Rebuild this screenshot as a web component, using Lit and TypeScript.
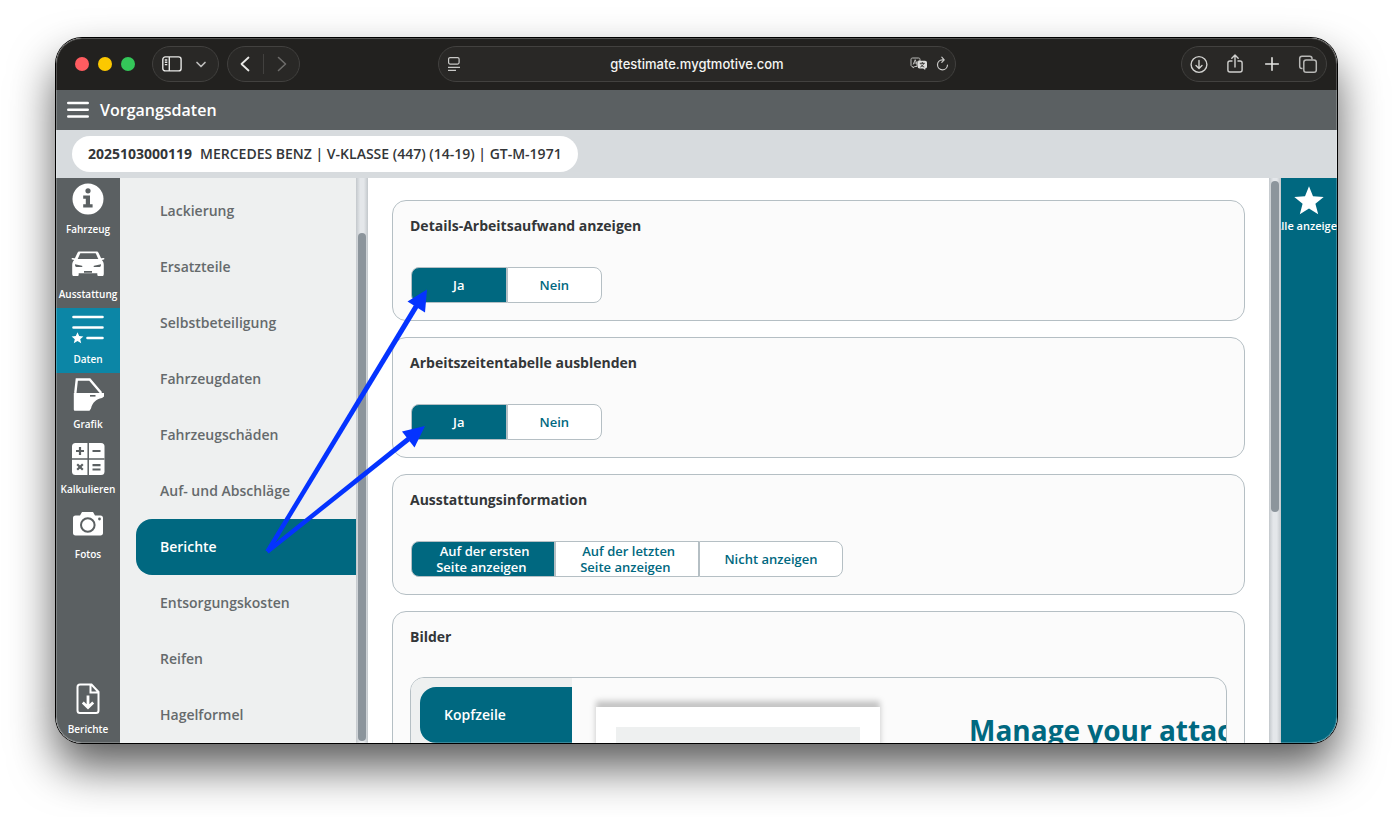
import { LitElement, html, css, svg } from "lit";
import { customElement, property, state } from "lit/decorators.js";
import { classMap } from "lit/directives/class-map.js";

const railIcons: Record<string, unknown> = {
  info: svg`<circle cx="18" cy="18" r="15.5" fill="#fff"/><circle cx="18" cy="9.8" r="2.6" fill="#5b6062"/><path d="M13.2 14.6H20v8.6h2.6v3.2h-9.4v-3.2h2.6v-5.4h-2.6z" fill="#5b6062"/>`,
  car: svg`<path d="M9.5 5.5h17c1 0 1.6.5 2 1.3l2.6 5.4 2.7-.3c.8 0 .8 1.4 0 1.7l-2 .5c1.4 1.2 2 2.9 2 4.8v8.5c0 1.7-.4 2.6-1.6 2.6h-3.4c-1 0-1.5-.7-1.5-1.6v-1.2H8.700v1.200c0 .9-.5 1.600-1.500 1.600H3.800c-1.200 0-1.600-.900-1.600-2.600v-8.500c0-1.900.600-3.600 2-4.800l-2-.5c-.8-.3-.8-1.700 0-1.700l2.700.3 2.600-5.400c.4-.8 1-1.300 2-1.300z" fill="#fff"/><path d="M10.300 7.300h15.400l2.600 5.600H7.700z" fill="#5b6062"/><path d="M5 18.300l7 1.500c.6.200.6 1.200-.2 1.200H6.500C5.200 21 5 19.500 5 18.300zM31 18.300l-7 1.500c-.6.200-.6 1.200.2 1.200h5.300c1.300 0 1.500-1.500 1.500-2.700zM14 25h8v1.700h-8z" fill="#5b6062"/>`,
  list: svg`<path d="M3.500 6h29M3.500 16.500h29M17.500 27h15" stroke="#fff" stroke-width="2.600" stroke-linecap="round"/><path d="M7.500 21.200l1.700 3.800 4.200.4-3.200 2.800 1 4.100-3.700-2.200-3.700 2.200 1-4.100-3.200-2.800 4.200-.4z" fill="#fff"/>`,
  door: svg`<path d="M5.300 17 6.800 3.500h12.900L31.200 17" fill="none" stroke="#fff" stroke-width="2.400"/><path d="M3.800 17h30.200v3.500l-2 1.500c-6 1-9.500 4.500-11 10.500l-1.500 2.300H5.300c-1 0-1.500-.5-1.500-1.500z" fill="#fff"/><path d="M20 19.800h5.500" stroke="#5b6062" stroke-width="1.600"/>`,
  calc: svg`<rect x="2" y="2" width="32.500" height="32" rx="3.500" fill="#fff"/><path d="M18.200 2v32M2 18h32.500" stroke="#5b6062" stroke-width="1.500"/><path d="M6 10h8M10 6v8M22.500 10h8M7.200 23.200l5.600 5.600M12.800 23.200l-5.600 5.600M22.500 24.200h8M22.500 28.500h8" stroke="#5b6062" stroke-width="2.200"/>`,
  camera: svg`<path d="M5.500 9.500H10L12 6h11l2 3.500h5.500c1.700 0 2.500.9 2.500 2.500v15c0 1.600-.9 2.500-2.500 2.500h-25C3.900 29.500 3 28.600 3 27V12c0-1.600.9-2.500 2.500-2.500z" fill="#fff"/><circle cx="17.800" cy="19" r="6.800" fill="none" stroke="#5b6062" stroke-width="2"/><circle cx="29.500" cy="13" r="1.400" fill="#5b6062"/>`,
  report: svg`<path d="M10 3.500h11.500l7 7.500v18.500c0 1.700-.8 2.500-2.500 2.500H10c-1.700 0-2.500-.8-2.500-2.500V6c0-1.700.8-2.500 2.500-2.500zM20.500 3.500v8h8" fill="none" stroke="#fff" stroke-width="2"/><path d="M18 14.500v11M12.800 21.500l5.200 5 5.200-5" fill="none" stroke="#fff" stroke-width="2.800"/>`,
  star: svg`<path d="M18 4.200l4 10.100 10.700.6-8.300 6.800 2.800 10.500L18 26.400l-9.200 5.800 2.800-10.500-8.300-6.800 10.700-.6z" fill="#fff"/>`,
};

const glyph = (name: string) =>
  html`<svg width="36" height="36" viewBox="0 0 36 36" aria-hidden="true">${railIcons[name]}</svg>`;

@customElement("option-group")
export class OptionGroup extends LitElement {
  @property({ type: Array }) options: string[] = [];
  @property({ type: Boolean, reflect: true }) wide = false;
  @state() private selected = 0;

  static styles = css`
    :host { display: flex; margin-left: 1px; width: 191px; }
    :host([wide]) { width: 432px; }
    .option {
      flex: 1; height: 36px; padding: 0 4px; box-sizing: border-box;
      border: 1px solid #b5bfc4; background: #fff; color: #006880;
      font: 600 13px/16px "Open Sans", sans-serif; cursor: pointer;
    }
    :host([wide]) .option { padding: 0 20px; }
    .option:first-child { border-radius: 8px 0 0 8px; }
    .option:last-child { border-radius: 0 8px 8px 0; }
    .on { background: #006880; color: #fff; }
  `;

  render() {
    return this.options.map(
      (o, i) => html`<button
        type="button"
        class=${classMap({ option: true, on: i === this.selected })}
        aria-pressed=${i === this.selected}
        @click=${() => (this.selected = i)}
      >${o}</button>`
    );
  }
}

@customElement("app-root")
export class AppRoot extends LitElement {
  static styles = css`
    * { box-sizing: border-box; }
    :host {
      display: flex; height: 100vh; box-sizing: border-box; padding: 38px 56px 74px;
      background: #fff; overflow: hidden;
      font-family: "Open Sans", sans-serif; color: #333638;
    }
    button { border: 0; padding: 0; background: none; color: inherit; font: inherit; cursor: pointer; }
    a { color: inherit; text-decoration: none; }
    svg { display: block; flex: none; }
    .window {
      position: relative; flex: 1; min-width: 0; display: flex; flex-direction: column;
      border-radius: 26px;
      box-shadow: 0 0 0 1px #000, 0 24px 46px rgba(0, 0, 0, .65);
    }
    .clip {
      flex: 1; min-height: 0; display: flex; flex-direction: column;
      border-radius: 26px; overflow: hidden; background: #fff;
    }
    .edge {
      position: absolute; inset: 0; border-radius: 26px; pointer-events: none;
      box-shadow: inset 0 0 0 1px rgba(255, 255, 255, .22);
    }
    .toolbar {
      height: 52px; flex: none; display: grid; grid-template-columns: 1fr minmax(0, 518px) 1fr;
      align-items: center; background: #22211f; color: #e8e8e6;
    }
    .left { display: flex; align-items: center; }
    .lights { display: flex; gap: 9px; margin: 0 17px 0 19px; }
    .light { width: 14px; height: 14px; border-radius: 50%; background: #ff5c60; }
    .light.min { background: #fcc800; }
    .light.max { background: #34c759; }
    .pill {
      display: flex; align-items: center; height: 36px; border: 1px solid #42413f;
      border-radius: 18px; background: #292826;
    }
    .pill button { display: grid; place-items: center; }
    .tabs { width: 67px; margin-right: 8px; padding: 0 9px; justify-content: space-between; }
    .nav { width: 73px; padding: 0 9px; justify-content: space-between; }
    .split { width: 1px; height: 20px; background: #42413f; }
    .address { padding: 0 6px 0 8px; gap: 8px; }
    .url {
      flex: 1; min-width: 0; height: 24px; padding: 0 0 0 24px; border: 0; background: none; color: #f5f5f3;
      font: 500 13px/24px Inter, sans-serif; text-align: center;
    }
    .tools { justify-self: end; width: 146px; margin-right: 10px; padding: 0 8px 0 7px; justify-content: space-between; }
    .header { height: 40px; flex: none; display: flex; align-items: center; gap: 11px; padding: 0 11px; background: #5b6062; color: #fff; }
    .title { margin: 0; font-size: 16px; line-height: 24px; font-weight: 600; }
    .case { height: 48px; flex: none; display: flex; align-items: center; padding: 0 16px; background: #d7dbde; }
    .chip { display: flex; gap: 8px; padding: 8px 16px; border-radius: 18px; background: #fff; font-size: 14px; line-height: 20px; font-weight: 600; white-space: nowrap; }
    .chip b { font-weight: 700; }
    .body { flex: 1; min-height: 0; display: flex; }
    .rail { width: 64px; flex: none; display: flex; flex-direction: column; background: #5b6062; color: #fff; }
    .item {
      height: 65px; flex: none; display: flex; flex-direction: column; align-items: center; gap: 4px;
      padding-top: 3px; color: #fff; font-size: 10px; line-height: 16px; font-weight: 600; white-space: nowrap;
    }
    .item.on { background: #0c86a6; }
    .item.last { margin-top: auto; }
    .menu { width: 236px; flex: none; padding: 5px 0 0 16px; overflow: hidden; background: #eef0f0; }
    .entry {
      display: flex; align-items: center; height: 56px; padding: 0 0 2px 24px;
      border-radius: 16px 0 0 16px; color: #656a6c; font-size: 14px; font-weight: 600;
    }
    .entry.on { background: #006880; color: #fff; }
    .track {
      width: 12px; flex: none; display: flex; flex-direction: column; padding: 2px;
      background: linear-gradient(90deg, #c3c8cc, #e4e7ea 35%, #e4e7ea 65%, #c3c8cc);
    }
    .thumb { border-radius: 4px; background: #8c959c; }
    .menu-thumb { flex: 1; margin-top: 53px; }
    .main-thumb { height: 59%; margin-top: 1px; }
    .content { flex: 1; min-width: 0; overflow: hidden; padding: 22px 24px 0; display: flex; flex-direction: column; gap: 16px; }
    .card { flex: none; padding: 15px 17px 17px; border: 1px solid #b5bfc4; border-radius: 14px; background: #fbfbfb; }
    .name { margin: 0 0 31px; font-size: 14px; line-height: 20px; font-weight: 700; }
    .images { display: flex; height: 320px; margin-top: -1px; border: 1px solid #b5bfc4; border-radius: 14px; overflow: hidden; }
    .sections { width: 161px; flex: none; padding: 9px 0 0 9px; background: #eef0f0; }
    .paper { width: 284px; flex: none; margin: 29px 89px 0 24px; padding: 20px; background: #fff; box-shadow: 0 -6px 6px rgba(0, 0, 0, .22); }
    .sheet { height: 100%; background: #eef0f0; }
    .promo { margin: 32px 0 0; color: #006880; font-size: 28px; line-height: 40px; font-weight: 700; white-space: nowrap; }
    .aside { width: 56px; flex: none; overflow: hidden; background: #006880; }
    .aside .item { padding-top: 4px; gap: 0; font-size: 11px; }
    .arrows { position: absolute; left: 206px; top: 246px; pointer-events: none; }
  `;

  private rail = [
    ["info", "Fahrzeug"], ["car", "Ausstattung"], ["list", "Daten"],
    ["door", "Grafik"], ["calc", "Kalkulieren"], ["camera", "Fotos"],
  ];
  private entries = [
    "Lackierung", "Ersatzteile", "Selbstbeteiligung", "Fahrzeugdaten", "Fahrzeugschäden",
    "Auf- und Abschläge", "Berichte", "Entsorgungskosten", "Reifen", "Hagelformel",
  ];
  private cards = [
    { name: "Details-Arbeitsaufwand anzeigen", options: ["Ja", "Nein"] },
    { name: "Arbeitszeitentabelle ausblenden", options: ["Ja", "Nein"] },
    {
      name: "Ausstattungsinformation",
      options: ["\u00a0Auf der ersten Seite anzeigen\u00a0", "\u00a0Auf der letzten Seite anzeigen\u00a0", "Nicht anzeigen"],
    },
  ];

  private toolbar() {
    return html`<div class="toolbar">
      <div class="left">
        <div class="lights">
          <button class="light" aria-label="Schließen"></button>
          <button class="light min" aria-label="Minimieren"></button>
          <button class="light max" aria-label="Vergrößern"></button>
        </div>
        <div class="pill tabs">
          <button aria-label="Seitenleiste">
            <svg width="20" height="16" viewBox="0 0 20 16" fill="none" stroke="currentColor" stroke-width="1.400"><rect x=".8" y=".9" width="18.300" height="14" rx="2.500"/><path d="M7.300 1v14M2.800 4h2.500M2.800 6.300h2.500M2.800 8.600h2.500"/></svg>
          </button>
          <button aria-label="Tabgruppen">
            <svg width="16" height="16" viewBox="0 0 16 16" fill="none" stroke="#bdbdbb" stroke-width="1.700" stroke-linecap="round" stroke-linejoin="round"><path d="M4 6.500l4 4 4-4"/></svg>
          </button>
        </div>
        <div class="pill nav">
          <button aria-label="Zurück"><svg width="16" height="18" viewBox="0 0 16 18" fill="none" stroke="currentColor" stroke-width="1.800" stroke-linecap="round" stroke-linejoin="round"><path d="M11.500 2.500L4.500 9l7 6.500"/></svg></button>
          <span class="split"></span>
          <button aria-label="Vorwärts"><svg width="16" height="18" viewBox="0 0 16 18" fill="none" stroke="#6d6c6a" stroke-width="1.600" stroke-linecap="round" stroke-linejoin="round"><path d="M4.500 2.500l7 6.500-7 6.500"/></svg></button>
        </div>
      </div>
      <div class="pill address">
        <button aria-label="Seitenmenü"><svg width="14" height="16" viewBox="0 0 14 16" fill="none" stroke="#c9c9c7" stroke-width="1.200"><rect x="1.600" y="1.600" width="10.500" height="6.500" rx="1.500"/><path d="M1 11.300h12M1 14.400h8"/></svg></button>
        <input class="url" type="text" aria-label="Adresse" value="gtestimate.mygtmotive.com" />
        <button aria-label="Übersetzen"><svg width="18" height="14" viewBox="0 0 18 14"><path d="M2.500 1h6c1 0 1.500.5 1.500 1.500V4H9c-1 0-2 .8-2 2v3.500H4.800L3 11V9.500h-.5C1.500 9.500 1 9 1 8V2.500C1 1.500 1.500 1 2.500 1z" fill="none" stroke="#bdbdbb"/><path d="M3.200 7.500l2-4.800 2 4.800M4 6h2.500" fill="none" stroke="#bdbdbb"/><path d="M9.500 3.800H15c1.300 0 2 .7 2 2v3.700c0 1.200-.6 2-1.800 2V13l-2-1.500H9.500c-1.200 0-1.800-.8-1.800-2V5.800c0-1.300.6-2 1.800-2z" fill="#dededc"/><path d="M9.800 6.300h5M12.300 5v1.300M10.300 10c2-.8 3-2 3.300-3.500M11 7.500c.6 1.300 1.800 2 3.300 2.500" fill="none" stroke="#292826" stroke-width=".9"/></svg></button>
        <button aria-label="Neu laden"><svg width="13" height="16" viewBox="0 0 13 16" fill="none" stroke="#c9c9c7" stroke-width="1.200" stroke-linecap="round" stroke-linejoin="round"><path d="M7.500 3.800H6.300A5 5 0 1 0 11.500 9M5.800 1.200l2.400 2.600-2.400 2.600"/></svg></button>
      </div>
      <div class="pill tools">
        <button aria-label="Downloads"><svg width="20" height="20" viewBox="0 0 20 20" fill="none" stroke="#d0d0ce" stroke-width="1.400" stroke-linecap="round" stroke-linejoin="round"><circle cx="10" cy="10.500" r="7.900"/><path d="M10 6.500v7.500M7 11.500l3 3 3-3"/></svg></button>
        <button aria-label="Teilen"><svg width="20" height="20" viewBox="0 0 20 20" fill="none" stroke="#d0d0ce" stroke-width="1.400" stroke-linecap="round" stroke-linejoin="round"><path d="M7 7H5C3.600 7 2.900 7.700 2.900 9v7c0 1.300.7 2 2.100 2h10c1.400 0 2.100-.7 2.100-2V9c0-1.300-.7-2-2.100-2h-2M10 13V1.200M6.800 4.200L10 1l3.200 3.200"/></svg></button>
        <button aria-label="Neuer Tab"><svg width="20" height="20" viewBox="0 0 20 20" fill="none" stroke="#e4e4e2" stroke-width="1.600" stroke-linecap="round"><path d="M10 3.700v12.600M3.700 10h12.600"/></svg></button>
        <button aria-label="Tabübersicht"><svg width="20" height="20" viewBox="0 0 20 20" fill="none" stroke="#b8b8b6" stroke-width="1.500"><path d="M4.500 14.500H4c-1.500 0-2.300-.8-2.300-2.300V4.500C1.700 3 2.500 2.200 4 2.200h7.700c1.500 0 2.300.8 2.300 2.300v1"/><rect x="5.800" y="6" width="12.500" height="12.300" rx="2.300"/></svg></button>
      </div>
    </div>`;
  }

  render() {
    return html`<div class="window">
      <div class="clip">
        ${this.toolbar()}
        <header class="header">
          <button aria-label="Menü"><svg width="22" height="18" viewBox="0 0 22 18" stroke="#fff" stroke-width="2.600" stroke-linecap="round"><path d="M1.300 2h19.400M1.300 8.700h19.400M1.300 15.500h19.400"/></svg></button>
          <h1 class="title">Vorgangsdaten</h1>
        </header>
        <div class="case">
          <div class="chip"><b>2025103000119</b><span>MERCEDES BENZ | V-KLASSE (447) (14-19) | GT-M-1971</span></div>
        </div>
        <div class="body">
          <nav class="rail">
            ${this.rail.map(([icon, label]) => html`<a href="#" class=${classMap({ item: true, on: icon === "list" })}>${glyph(icon)}<span>${label}</span></a>`)}
            <a href="#" class="item last">${glyph("report")}<span>Berichte</span></a>
          </nav>
          <nav class="menu">
            ${this.entries.map((e) => html`<a href="#" class=${classMap({ entry: true, on: e === "Berichte" })}>${e}</a>`)}
          </nav>
          <div class="track"><div class="thumb menu-thumb"></div></div>
          <main class="content">
            ${this.cards.map((c) => html`<section class="card">
              <h2 class="name">${c.name}</h2>
              <option-group .options=${c.options} ?wide=${c.options.length > 2}></option-group>
            </section>`)}
            <section class="card">
              <h2 class="name">Bilder</h2>
              <div class="images">
                <div class="sections"><a href="#" class="entry on">Kopfzeile</a></div>
                <div class="paper"><div class="sheet"></div></div>
                <p class="promo">Manage your attachments</p>
              </div>
            </section>
          </main>
          <div class="track"><div class="thumb main-thumb"></div></div>
          <aside class="aside"><a href="#" class="item">${glyph("star")}<span>Alle anzeigen</span></a></aside>
        </div>
      </div>
      <div class="edge"></div>
      <svg class="arrows" width="170" height="272" viewBox="262 284 170 272" fill="#0433ff" aria-hidden="true">
        <path d="M265.500 550.500L414 305l4.500 2.500L269.500 552.500z"/><path d="M427 289.500l-19.500 12 17.500 11z"/>
        <path d="M266 550L407 437l3 4L268.500 553.500z"/><path d="M425 426l-23 5.500 12.500 16z"/>
      </svg>
    </div>`;
  }
}
